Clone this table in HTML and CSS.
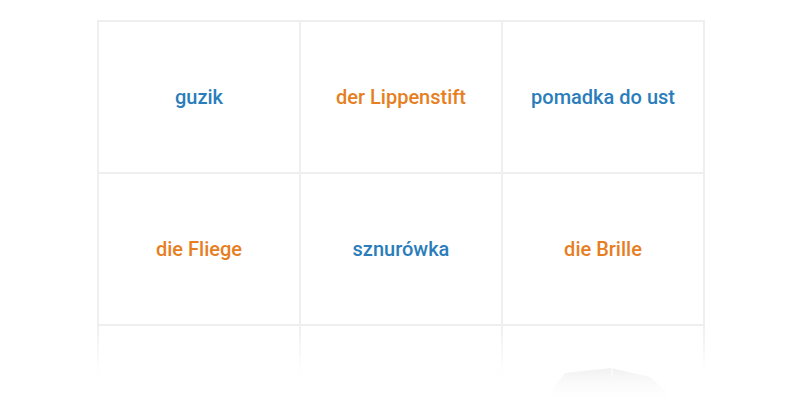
FILE: index.html
```html
<!DOCTYPE html>
<html>
<head>
<meta charset="utf-8">
<link rel="stylesheet" href="styles.css">
</head>
<body>
<div class="grid">
  <div class="cell blue">guzik</div>
  <div class="cell orange">der Lippenstift</div>
  <div class="cell blue">pomadka do ust</div>
  <div class="cell orange">die Fliege</div>
  <div class="cell blue">sznurówka</div>
  <div class="cell orange">die Brille</div>
  <div class="cell"></div>
  <div class="cell"></div>
  <div class="cell"></div>
</div>
<div class="fade">
  <svg class="shape" width="120" height="30" viewBox="0 0 120 30">
    <defs>
      <linearGradient id="g" x1="0" y1="0" x2="0" y2="1">
        <stop offset="0" stop-color="#f1f1f1"/>
        <stop offset="0.5" stop-color="#fafafa"/>
        <stop offset="1" stop-color="#ffffff"/>
      </linearGradient>
    </defs>
    <path d="M0 26 L15 6 L61 1 L100 10 L116 24 L118 30 L0 30 Z" fill="url(#g)"/>
    <path d="M62 1 L62 10" stroke="#fbfbfb" stroke-width="1.5"/>
  </svg>
</div>
</body>
</html>
```
FILE: styles.css
```css
html, body {
  margin: 0;
  padding: 0;
  background: #fff;
  overflow: hidden;
}
body {
  font-family: Roboto, "Liberation Sans", sans-serif;
}
.grid {
  width: 604px;
  margin: 20px 0 0 97px;
  padding: 2px;
  background: #efefef;
  display: grid;
  grid-template-columns: repeat(3, 200px);
  grid-auto-rows: 150px;
  gap: 2px;
}
.cell {
  background: #fff;
  display: flex;
  align-items: center;
  justify-content: center;
  font-size: 20px;
  font-weight: 500;
}
.blue { color: #2a7dba; }
.orange { color: #e67e22; }
.fade {
  position: fixed;
  left: 0;
  right: 0;
  bottom: 0;
  height: 76px;
  background: linear-gradient(to bottom, rgba(255,255,255,0) 0%, rgba(255,255,255,0.85) 55%, #fff 72%);
}
.shape {
  position: absolute;
  left: 550px;
  top: 43px;
}
```
